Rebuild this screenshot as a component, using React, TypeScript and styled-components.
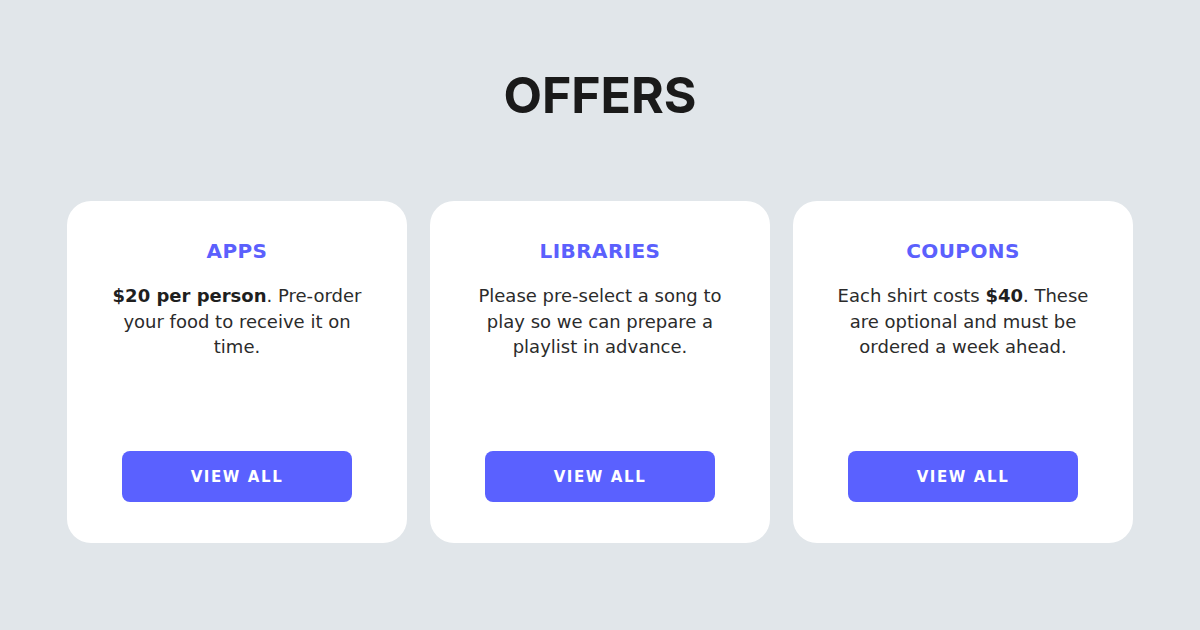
import React from "react";
import styled, { createGlobalStyle } from "styled-components";

const Global = createGlobalStyle`
  html, body { margin: 0; padding: 0; background: #e1e6ea; }
  body { font-family: "DejaVu Sans", "Liberation Sans", sans-serif; }
`;

const Page = styled.main`
  width: 1200px;
  height: 630px;
  box-sizing: border-box;
  display: flex;
  flex-direction: column;
  align-items: center;
  padding-top: 65px;
`;

const Title = styled.h1`
  margin: 0;
  font-family: Inter, "Liberation Sans", sans-serif;
  font-weight: 700;
  font-size: 50px;
  line-height: 60px;
  letter-spacing: 0;
  color: #1a1a1a;
`;

const Grid = styled.div`
  margin-top: 76px;
  display: grid;
  grid-template-columns: repeat(3, 340px);
  gap: 23px;
`;

const Card = styled.section`
  height: 342px;
  box-sizing: border-box;
  background: #ffffff;
  border-radius: 24px;
  display: flex;
  flex-direction: column;
  align-items: center;
  padding: 36px 20px 41px;
`;

const Heading = styled.h2`
  margin: 0;
  font-family: "DejaVu Sans", sans-serif;
  font-weight: 700;
  font-size: 20px;
  line-height: 28px;
  letter-spacing: 0.4px;
  color: #5b60fd;
`;

const Body = styled.p`
  margin: 18px 0 0;
  max-width: 272px;
  text-align: center;
  font-size: 18px;
  line-height: 25.5px;
  color: #2b2b2b;
  b { font-weight: 700; color: #1f1f1f; }
`;

const Button = styled.button`
  margin-top: auto;
  width: 230px;
  height: 51px;
  border: none;
  border-radius: 8px;
  background: #5a61ff;
  color: #ffffff;
  font-family: "DejaVu Sans", sans-serif;
  font-weight: 700;
  font-size: 15px;
  letter-spacing: 1.6px;
  padding: 0;
  cursor: pointer;
`;

const offers = [
  {
    title: "APPS",
    body: (
      <>
        <b>$20 per person</b>. Pre-order your food to receive it on time.
      </>
    ),
  },
  {
    title: "LIBRARIES",
    body: <>Please pre-select a song to play so we can prepare a playlist in advance.</>,
  },
  {
    title: "COUPONS",
    body: (
      <>
        Each shirt costs <b>$40</b>. These are optional and must be ordered a week ahead.
      </>
    ),
  },
];

export default function App() {
  return (
    <>
      <Global />
      <Page>
        <Title>OFFERS</Title>
        <Grid>
          {offers.map((o) => (
            <Card key={o.title}>
              <Heading>{o.title}</Heading>
              <Body>{o.body}</Body>
              <Button>VIEW ALL</Button>
            </Card>
          ))}
        </Grid>
      </Page>
    </>
  );
}
